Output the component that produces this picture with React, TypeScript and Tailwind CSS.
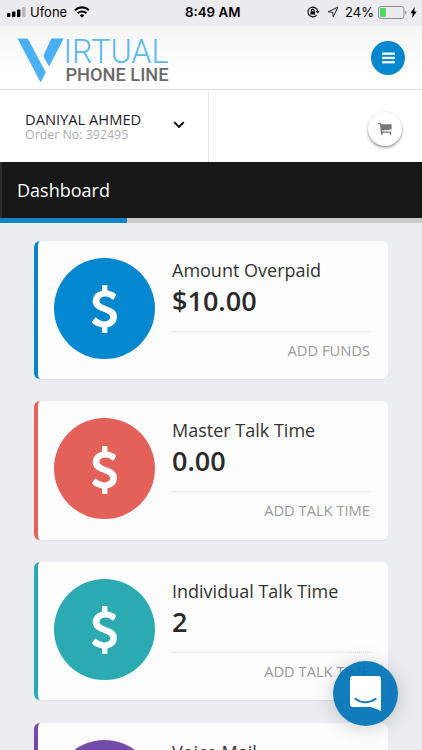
interface CardData {
    titulo: string;
    valor: string;
    link: string;
    border: string;
    bg: string;
}

const cards: CardData[] = [
    { titulo: "Amount Overpaid", valor: "$10.00", link: "ADD FUNDS", border: "border-[#0a84c6]", bg: "bg-[#0388cf]" },
    { titulo: "Master Talk Time", valor: "0.00", link: "ADD TALK TIME", border: "border-[#e36159]", bg: "bg-[#e36159]" },
    { titulo: "Individual Talk Time", valor: "2", link: "ADD TALK TIME", border: "border-[#2baab1]", bg: "bg-[#2baab1]" },
    { titulo: "Voice Mail", valor: "", link: "", border: "border-[#734ba9]", bg: "bg-[#734ba9]" },
];

function StatusBar() {
    return (
        <div className="relative flex h-[26px] shrink-0 items-center justify-between bg-[#ececf0] pl-[7px] pr-[5px] pb-[2px] font-['Inter',sans-serif] text-black">
            <div className="flex items-center">
                <svg width="19" height="10" viewBox="0 0 19 10">
                    <rect x="0" y="6" width="3.4" height="4" rx="0.8" />
                    <rect x="5" y="4.5" width="3.4" height="5.5" rx="0.8" />
                    <rect x="10" y="2.5" width="3.4" height="7.5" rx="0.8" />
                    <rect x="15" y="0" width="3.4" height="10" rx="0.8" fill="#b5b5b8" />
                </svg>
                <span className="ml-[4px] text-[13px] leading-none">Ufone</span>
                <svg className="ml-[7px]" width="16" height="12" viewBox="0 0 16 12" fill="none" stroke="#000" strokeWidth="2.1">
                    <path d="M1 4.2a10.2 10.2 0 0 1 14 0" />
                    <path d="M3.6 7.2a6.4 6.4 0 0 1 8.8 0" />
                    <path d="M5.6 9.2a3.6 3.6 0 0 1 4.8 0L8 11.8z" fill="#000" stroke="none" />
                </svg>
            </div>
            <span className="absolute left-[185px] top-[5px] text-[13.3px] leading-[14px] font-semibold whitespace-nowrap">8:49 AM</span>
            <div className="flex items-center">
                <svg width="13" height="12" viewBox="0 0 13 12" fill="none" stroke="#000" strokeWidth="1.1">
                    <path d="M10.7 5.2A4.9 4.9 0 1 0 9.6 9.2" />
                    <path d="M8.7 4.9h4l-2 2.5z" fill="#000" stroke="none" />
                    <rect x="3.5" y="5.3" width="4.6" height="3.3" fill="#000" stroke="none" />
                    <path d="M4.4 5.4V4.5a1.4 1.4 0 0 1 2.8 0v.9" />
                </svg>
                <svg className="ml-[7px]" width="12" height="12" viewBox="0 0 12 12" fill="none" stroke="#222" strokeWidth="1" strokeLinejoin="round">
                    <path d="M10.8 1.2 1.2 5.8l4.6.5.4 4.6z" />
                </svg>
                <span className="ml-[6px] text-[13px] leading-none">24%</span>
                <svg className="ml-[4px]" width="29" height="13" viewBox="0 0 29 13">
                    <rect x="0.5" y="0.5" width="25.5" height="12" rx="2.5" fill="none" stroke="#909094" />
                    <rect x="2" y="2" width="6" height="9" rx="0.8" fill="#4cd964" />
                    <path d="M27.2 4.4q1.4.6 1.4 2.1t-1.4 2.1z" fill="#909094" />
                </svg>
                <svg className="ml-[3px]" width="7" height="11" viewBox="0 0 7 11">
                    <path d="M4.8 0 .3 6.2h2.4L2 11l4.7-6.4H4.2z" />
                </svg>
            </div>
        </div>
    );
}

function Logo() {
    return (
        <svg className="overflow-visible" width="152" height="60" viewBox="0 -6 152 60">
            <path d="M-.5 4.5H9.7L27.7 38.2 22.7 48.5z" fill="#49b0f5" />
            <path d="M33.3 4.5H45.7L31 32.5 25.3 22z" fill="#49b0f5" />
            <text x="45.5" y="28.5" fontSize="34" fontWeight="300" fill="#5ab8f4" fontFamily="Roboto, sans-serif" textLength="105" lengthAdjust="spacingAndGlyphs">IRTUAL</text>
            <text x="47.5" y="47.3" fontSize="18.7" fontWeight="500" fill="#6a6a6c" fontFamily="Roboto, sans-serif" textLength="103" lengthAdjust="spacingAndGlyphs">PHONE LINE</text>
        </svg>
    );
}

function Header() {
    return (
        <header className="flex h-[64px] shrink-0 items-center justify-between border-b border-[#dedede] bg-linear-to-b from-[#f6f6f6] to-white to-80% pl-[18px] pr-[17px]">
            <Logo />
            <button className="flex size-[34px] items-center justify-center rounded-full bg-[#0388cf]">
                <svg width="13" height="12" viewBox="0 0 13 12" fill="#fff">
                    <rect y="0.5" width="13" height="2.3" />
                    <rect y="4.8" width="13" height="2.3" />
                    <rect y="9.1" width="13" height="2.3" />
                </svg>
            </button>
        </header>
    );
}

function UserBar() {
    return (
        <div className="flex h-[72px] shrink-0 bg-white">
            <div className="mt-[2px] flex w-[209px] items-center justify-between border-r border-[#e4e4e4] pl-[25px] pr-[23px]">
                <div>
                    <p className="-mt-px text-[14.7px] leading-[16px] text-[#1d2127]">DANIYAL AHMED</p>
                    <p className="text-[12.4px] leading-[16px] text-[#acacac]">Order No: 392495</p>
                </div>
                <svg className="-mt-[5px]" width="12" height="8" viewBox="0 0 12 8" fill="none" stroke="#000" strokeWidth="1.8">
                    <path d="M1.2 1.2 6 6l4.8-4.8" />
                </svg>
            </div>
            <div className="flex flex-1 items-center justify-end pr-[20px] pt-[5px]">
                <button className="flex size-[34px] items-center justify-center rounded-full bg-white shadow-[0_1.5px_3px_rgba(0,0,0,0.45)]">
                    <svg width="14" height="12" viewBox="0 0 14 12" fill="#777">
                        <path d="M0 0h2.9l.3 1.2H13.6v5.4L4.1 7.5l.2 1.1h8.9v3.2h-1.5V9.7H4.7v2.1H3.2L1.9 1.2H0z" />
                    </svg>
                </button>
            </div>
        </div>
    );
}

function DollarIcon() {
    return (
        <svg className="mt-[2px] text-white" width="25" height="48" viewBox="44 0 934 1792" fill="currentColor">
            <path d="M978 1185q0 153-99.500 263.500t-258.500 136.500v175q0 14-9 23t-23 9h-135q-13 0-22.500-9.500t-9.500-22.500v-175q-66-9-127.500-31t-101.500-44.500-74-48-46.500-37.500-17.500-18q-17-21-2-41l103-135q7-10 23-12 15-2 24 9l2 2q113 99 243 125 37 8 74 8 81 0 142.500-43t61.500-122q0-28-15-53t-33.500-42-58.500-37.500-66-32-80-32.500q-39-16-61.500-25t-61.500-26.500-62.500-31-56.500-35.500-53.500-42.500-43.500-49-35.500-58-21-66.500-8.500-78q0-138 98-242t255-134v-180q0-13 9.500-22.500t22.500-9.500h135q14 0 23 9t9 23v176q57 6 110.500 23t87 33.500 63.500 37.500 39 29 15 14q17 18 5 38l-81 146q-8 15-23 16-14 3-27-7-3-3-14.500-12t-39-26.500-58.500-32-74.500-26-85.500-11.500q-95 0-155 43t-60 111q0 26 8.500 48t29.500 41.500 39.500 33 56 31 60.500 27 70 27.500q53 20 81 31.500t76 35 75.500 42.500 62 50 53 63.500 31.500 76.500 13 94z" />
        </svg>
    );
}

function Card(props: { card: CardData }) {
    const { card } = props;

    return (
        <div className={`flex h-[138.5px] shrink-0 rounded-[6px] border-l-4 bg-[#fdfdfd] pl-[16px] pr-[18px] shadow-[0_1px_1px_rgba(0,0,0,0.06)] ${card.border}`}>
            <div className={`mt-[17px] flex size-[101px] shrink-0 items-center justify-center rounded-full ${card.bg}`}>
                <DollarIcon />
            </div>
            <div className="ml-[17px] flex-1 whitespace-nowrap">
                <h4 className="mt-[17px] text-[18px] leading-[24px] text-[#333]">{card.titulo}</h4>
                <p className="mt-[2px] h-[34px] text-[27px] leading-[34px] font-semibold text-[#2a2a2a]">{card.valor}</p>
                <div className="mt-[13px] border-t border-dotted border-[#d8d8d8] pt-[8px] text-right text-[14.7px] leading-[20px] text-[#999]">
                    {card.link}
                </div>
            </div>
        </div>
    );
}

function ChatButton() {
    return (
        <button className="absolute left-[333px] top-[661px] flex size-[65px] items-center justify-center rounded-full bg-[#0073b5]/93 shadow-[0_2px_20px_rgba(0,0,0,0.2)]">
            <svg width="31" height="35" viewBox="0 0 31 35">
                <path d="M3 0h25A3 3 0 0 1 31 3V35q-5-2.5-10.5-4H3A3 3 0 0 1 0 28V3A3 3 0 0 1 3 0z" fill="#fff" />
                <path d="M5.3 22.7q10 7.2 20.4 0" fill="none" stroke="#127ab9" strokeWidth="1.9" strokeLinecap="round" />
            </svg>
        </button>
    );
}

function App() {
    return (
        <div className="relative flex h-[750px] w-[422px] flex-col overflow-hidden bg-[#ecedf0] font-['Open_Sans',sans-serif]">
            <StatusBar />
            <Header />
            <UserBar />
            <div className="flex h-[56px] shrink-0 items-center border-l-2 border-[#2b2b2b] bg-[#171717] pl-[15px]">
                <h2 className="text-[18px] text-white">Dashboard</h2>
            </div>
            <div className="h-[5px] shrink-0 bg-[#cacaca]">
                <div className="h-full w-[127px] bg-[#1285c7]" />
            </div>
            <main className="flex flex-col gap-[22.2px] px-[34px] pt-[17.5px]">
                {cards.map((card) => (
                    <Card key={card.titulo} card={card} />
                ))}
            </main>
            <ChatButton />
        </div>
    );
}

export default App;
